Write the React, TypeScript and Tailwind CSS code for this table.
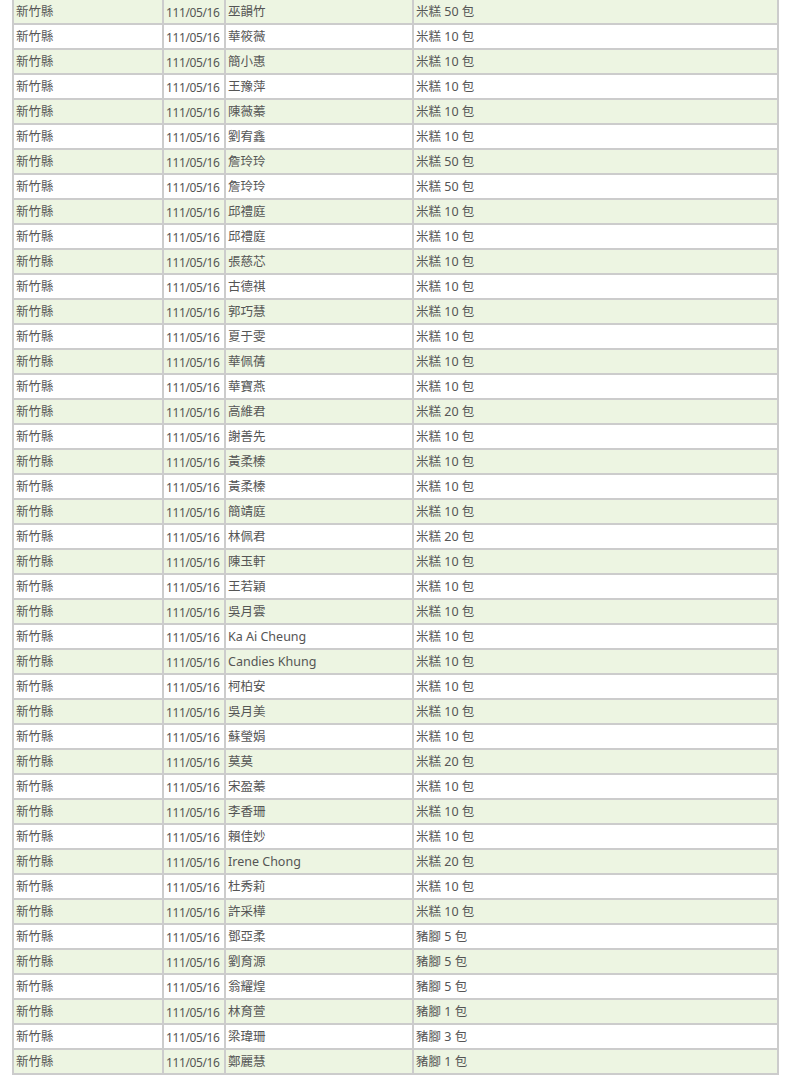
import React from "react";

type Row = { name: string; item: string };

const rows: Row[] = [
  { name: "巫韻竹", item: "米糕 50 包" },
  { name: "華筱薇", item: "米糕 10 包" },
  { name: "簡小惠", item: "米糕 10 包" },
  { name: "王豫萍", item: "米糕 10 包" },
  { name: "陳薇蓁", item: "米糕 10 包" },
  { name: "劉宥鑫", item: "米糕 10 包" },
  { name: "詹玲玲", item: "米糕 50 包" },
  { name: "詹玲玲", item: "米糕 50 包" },
  { name: "邱禮庭", item: "米糕 10 包" },
  { name: "邱禮庭", item: "米糕 10 包" },
  { name: "張慈芯", item: "米糕 10 包" },
  { name: "古德祺", item: "米糕 10 包" },
  { name: "郭巧慧", item: "米糕 10 包" },
  { name: "夏于雯", item: "米糕 10 包" },
  { name: "華佩蒨", item: "米糕 10 包" },
  { name: "華寶燕", item: "米糕 10 包" },
  { name: "高維君", item: "米糕 20 包" },
  { name: "謝善先", item: "米糕 10 包" },
  { name: "黃柔榛", item: "米糕 10 包" },
  { name: "黃柔榛", item: "米糕 10 包" },
  { name: "簡靖庭", item: "米糕 10 包" },
  { name: "林佩君", item: "米糕 20 包" },
  { name: "陳玉軒", item: "米糕 10 包" },
  { name: "王若穎", item: "米糕 10 包" },
  { name: "吳月雲", item: "米糕 10 包" },
  { name: "Ka Ai Cheung", item: "米糕 10 包" },
  { name: "Candies Khung", item: "米糕 10 包" },
  { name: "柯柏安", item: "米糕 10 包" },
  { name: "吳月美", item: "米糕 10 包" },
  { name: "蘇瑩娟", item: "米糕 10 包" },
  { name: "莫莫", item: "米糕 20 包" },
  { name: "宋盈蓁", item: "米糕 10 包" },
  { name: "李香珊", item: "米糕 10 包" },
  { name: "賴佳妙", item: "米糕 10 包" },
  { name: "Irene Chong", item: "米糕 20 包" },
  { name: "杜秀莉", item: "米糕 10 包" },
  { name: "許采樺", item: "米糕 10 包" },
  { name: "鄧亞柔", item: "豬腳 5 包" },
  { name: "劉育源", item: "豬腳 5 包" },
  { name: "翁耀煌", item: "豬腳 5 包" },
  { name: "林育萱", item: "豬腳 1 包" },
  { name: "梁瑋珊", item: "豬腳 3 包" },
  { name: "鄭麗慧", item: "豬腳 1 包" },
];

const cell = "border-2 border-[#cccccc] pl-[2px] pt-[2px] pb-0 pr-0 h-[25px] align-middle whitespace-nowrap leading-none";

export default function App() {
  return (
    <div
      className="bg-white w-[793px] h-[1076px] overflow-hidden pl-[12px] text-[12.5px] text-[#555555]"
      style={{ fontFamily: '"Noto Sans", "Noto Sans CJK TC", sans-serif' }}
    >
      <table className="table-fixed border-collapse w-[767px] -mt-[2px]">
        <colgroup>
          <col className="w-[150px]" />
          <col className="w-[62px]" />
          <col className="w-[188px]" />
          <col />
        </colgroup>
        <tbody>
          {rows.map((r, i) => (
            <tr key={i} className={i % 2 === 0 ? "bg-[#edf5e2]" : "bg-white"}>
              <td className={cell}>新竹縣</td>
              <td className={`${cell} text-[12px] tracking-[-0.4px]`}>111/05/16</td>
              <td className={cell}>{r.name}</td>
              <td className={cell}>{r.item}</td>
            </tr>
          ))}
        </tbody>
      </table>
    </div>
  );
}
